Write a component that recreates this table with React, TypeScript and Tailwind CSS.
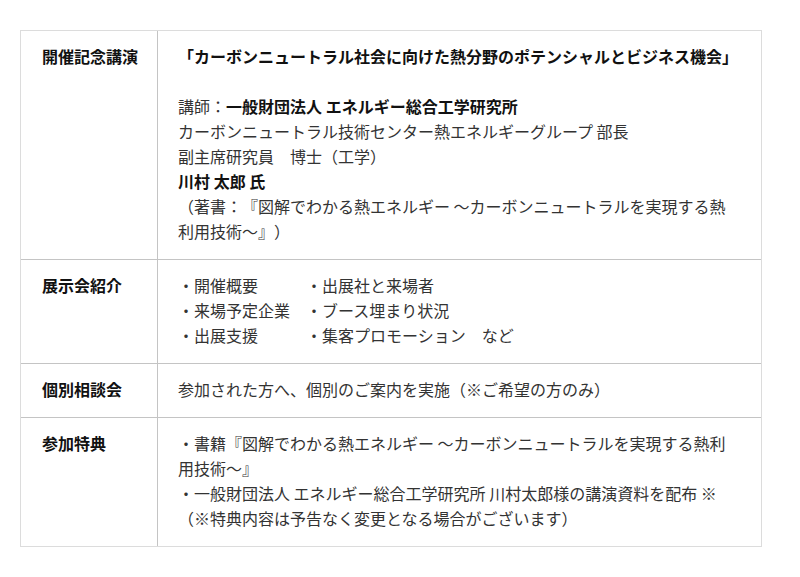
const rows = [
    { label: '開催記念講演', key: 'lecture' },
    { label: '展示会紹介', key: 'expo' },
    { label: '個別相談会', key: 'consult' },
    { label: '参加特典', key: 'bonus' },
];

function Cell({ k }: { k: string }) {
    switch (k) {
        case 'lecture':
            return (
                <>
                    <p className="font-bold text-[#111]">「カーボンニュートラル社会に向けた熱分野のポテンシャルとビジネス機会」</p>
                    <p>&nbsp;</p>
                    <p>講師：<span className="font-bold text-[#111]">一般財団法人 エネルギー総合工学研究所</span></p>
                    <p>カーボンニュートラル技術センター熱エネルギーグループ 部長</p>
                    <p>副主席研究員　博士（工学）</p>
                    <p className="font-bold text-[#111]">川村 太郎 氏</p>
                    <p className="whitespace-nowrap">（著書：『図解でわかる熱エネルギー ～カーボンニュートラルを実現する熱</p>
                    <p>利用技術～』）</p>
                </>
            );
        case 'expo':
            return (
                <div className="grid grid-cols-[128px_auto]">
                    <p>・開催概要</p>
                    <p>・出展社と来場者</p>
                    <p>・来場予定企業</p>
                    <p>・ブース埋まり状況</p>
                    <p>・出展支援</p>
                    <p>・集客プロモーション　など</p>
                </div>
            );
        case 'consult':
            return <p>参加された方へ、個別のご案内を実施（※ご希望の方のみ）</p>;
        default:
            return (
                <>
                    <p className="whitespace-nowrap">・書籍『図解でわかる熱エネルギー ～カーボンニュートラルを実現する熱利</p>
                    <p>用技術～』</p>
                    <p className="whitespace-nowrap">・一般財団法人 エネルギー総合工学研究所 川村太郎様の講演資料を配布 ※</p>
                    <p>（※特典内容は予告なく変更となる場合がございます）</p>
                </>
            );
    }
}

export default function App() {
    return (
        <div className="w-[800px] h-[577px] bg-white pt-[30px] pl-[20px]" style={{ fontFamily: '"Noto Sans CJK JP", "Noto Sans", sans-serif' }}>
            <div className="w-[742px] border border-[#dcdcdc] text-[16px] leading-[25px] text-[#333] [text-spacing-trim:space-all]">
                {rows.map((row, i) => (
                    <div key={row.key} className={`flex ${i > 0 ? 'border-t border-[#c4c4c4]' : ''}`}>
                        <div className="w-[137px] shrink-0 border-r border-[#c4c4c4] pl-[21px] pt-[13px] pb-[15px] font-bold text-[#111]">
                            {row.label}
                        </div>
                        <div className="flex-1 pl-[20px] pr-[16px] pt-[13px] pb-[15px]">
                            <Cell k={row.key} />
                        </div>
                    </div>
                ))}
            </div>
        </div>
    );
}
